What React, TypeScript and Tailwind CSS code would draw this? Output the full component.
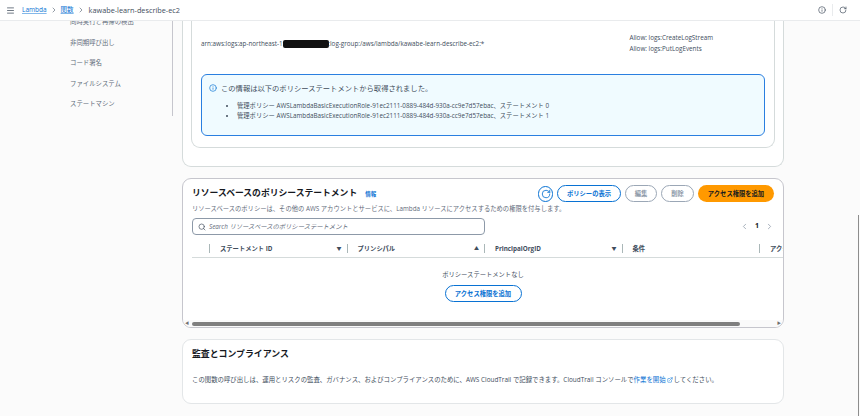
import React from "react";
import { ChevronLeft, ChevronRight, ExternalLink, Info, Menu, RotateCw, Search } from "lucide-react";

const FONT = "font-['Open_Sans','Noto_Sans_CJK_JP',sans-serif]";

const sideItems = ["同時実行と再帰の検出", "非同期呼び出し", "コード署名", "ファイルシステム", "ステートマシン"];

const columns = [
  { label: "ステートメント ID", sort: "▼" },
  { label: "プリンシパル", sort: "▲" },
  { label: "PrincipalOrgID", sort: "▼" },
  { label: "条件", sort: "" },
];

const arn = "AWSLambdaBasicExecutionRole-91ec2111-0889-484d-930a-cc9e7d57ebac、ステートメント";

const App: React.FC = () => {
  return (
    <div className={`${FONT} flex h-[416px] w-[860px] flex-col overflow-hidden bg-[#fbfbfb] text-[#414d5c]`}>
      {/* Breadcrumb bar */}
      <header className="flex h-[21px] shrink-0 items-center border-b border-[#e9ebed] bg-white pr-[13px] pl-[6px] text-[6.5px]">
        <Menu size={9} className="text-[#414d5c]" />
        <a className="ml-[7px] text-[#0972d3] underline decoration-[#0972d3]/50">Lambda</a>
        <ChevronRight size={8} className="mx-[3px] text-[#5f6b7a]" />
        <a className="text-[#0972d3] underline decoration-[#0972d3]/50">関数</a>
        <ChevronRight size={8} className="mx-[3.5px] text-[#5f6b7a]" />
        <span className="text-[7.3px] text-[#414d5c]">kawabe-learn-describe-ec2</span>
        <Info size={8} className="ml-auto text-[#414d5c]" />
        <div className="mx-[6px] h-[12px] w-px bg-[#e9ebed]" />
        <RotateCw size={8} className="text-[#414d5c]" />
      </header>

      <div className="flex min-h-0 flex-1">
        {/* Side nav */}
        <nav className="h-[95px] w-[173px] shrink-0 overflow-hidden border-r border-[#c6c6cd] pl-[70px] text-[6.4px] text-[#5f6b7a]">
          <ul className="-mt-[4px] flex flex-col gap-[10px]">
            {sideItems.map((item) => (
              <li key={item} className="h-[10.5px] leading-[10.5px] whitespace-nowrap">{item}</li>
            ))}
          </ul>
        </nav>

        <main className="ml-[9px] flex w-[602px] flex-col">
          {/* Permissions card, scrolled past its top */}
          <section className="h-[146px] rounded-b-[9px] border border-t-0 border-[#d5dbdb] bg-white pr-[8px] pl-[8px]">
            <div className="h-[127px] rounded-b-[9px] border border-t-0 border-[#d5dbdb] px-[9px]">
              <div className="flex h-[53px] items-start justify-between pt-[12px] text-[6.3px]">
                <div className="mt-[6px] flex items-center">
                  <span>arn:aws:logs:ap-northeast-1:</span>
                  <span className="mx-[-1px] h-[8px] w-[46px] rounded-[2px] bg-[#111]" />
                  <span>:log-group:/aws/lambda/kawabe-learn-describe-ec2:*</span>
                </div>
                <div className="mr-[52px] leading-[10.5px]">
                  <div>Allow: logs:CreateLogStream</div>
                  <div>Allow: logs:PutLogEvents</div>
                </div>
              </div>

              <div className="h-[62px] rounded-[6px] border border-[#2a7fe0] bg-[#f0fbff] px-[7px] py-[8px] text-[6.3px]">
                <div className="flex items-center gap-[3px] leading-[10px]">
                  <Info size={8} className="text-[#0972d3]" />
                  <span className="ml-[1px] text-[7.3px]">この情報は以下のポリシーステートメントから取得されました。</span>
                </div>
                <ul className="mt-[8px] ml-[28px] list-disc leading-[10px]">
                  <li>管理ポリシー {arn} 0</li>
                  <li>管理ポリシー {arn} 1</li>
                </ul>
              </div>
            </div>
          </section>

          {/* Resource-based policy card */}
          <section className="mt-[11px] h-[150px] overflow-hidden rounded-[9px] border border-[#c6c6cd] bg-white">
            <div className="flex items-center justify-between pt-[6px] pr-[9px] pl-[9px]">
              <div className="flex items-baseline gap-[8px]">
                <h2 className="text-[8.8px] font-bold text-[#16191f]">リソースベースのポリシーステートメント</h2>
                <a className="text-[5.5px] font-bold text-[#0972d3]">情報</a>
              </div>
              <div className="flex items-center gap-[4px] text-[6.3px] font-bold">
                <button className="flex h-[16px] w-[15px] items-center justify-center rounded-full border border-[#0972d3] text-[#0972d3]">
                  <RotateCw size={10} />
                </button>
                <button className="h-[17px] w-[64px] rounded-full border border-[#0972d3] text-[#0972d3]">ポリシーの表示</button>
                <button className="h-[17px] w-[32px] rounded-full border border-[#9ba7b6] text-[#8d99a8]">編集</button>
                <button className="h-[17px] w-[33px] rounded-full border border-[#9ba7b6] text-[#8d99a8]">削除</button>
                <button className="h-[17px] w-[76px] rounded-full bg-[#ff9900] text-[#16191f]">アクセス権限を追加</button>
              </div>
            </div>

            <p className="mt-[2px] pl-[9px] text-[6.3px] leading-[10px] text-[#5f6b7a]">
              リソースベースのポリシーは、その他の AWS アカウントとサービスに、Lambda リソースにアクセスするための権限を付与します。
            </p>

            <div className="mt-[4px] flex items-center justify-between pr-[9px] pl-[9px]">
              <div className="flex h-[17px] w-[293px] items-center gap-[3px] rounded-[4px] border border-[#8d99a8] px-[5px] text-[6.3px] text-[#5f6b7a] italic">
                <Search size={8} className="text-[#414d5c]" />
                <span>Search リソースベースのポリシーステートメント</span>
              </div>
              <div className="flex items-center gap-[5px] text-[7px] font-bold text-[#16191f]">
                <ChevronLeft size={9} className="text-[#8d99a8]" />
                <span className="px-[1px]">1</span>
                <ChevronRight size={9} className="text-[#8d99a8]" />
              </div>
            </div>

            <div className="mt-[7px] ml-[9px] flex h-[16px] items-center border-b border-[#d5dbdb] pb-[2px] text-[6.3px] font-bold whitespace-nowrap text-[#414d5c]">
              <div className="w-[17px] shrink-0" />
              {columns.map((col) => (
                <div key={col.label} className="flex h-[9px] w-[137.5px] shrink-0 items-center border-l border-[#aab7b8] pr-[5px] pl-[10px]">
                  <span>{col.label}</span>
                  <span className="ml-auto text-[5px]">{col.sort}</span>
                </div>
              ))}
              <div className="flex h-[9px] flex-1 items-center overflow-hidden border-l border-[#aab7b8] pl-[10px]">アクション</div>
            </div>

            <div className="flex h-[62px] flex-col items-center pt-[12px] text-[6.3px]">
              <span className="leading-[10px] text-[#414d5c]">ポリシーステートメントなし</span>
              <button className="mt-[5px] h-[17px] w-[77px] rounded-full border border-[#0972d3] font-bold text-[#0972d3]">アクセス権限を追加</button>
            </div>

            {/* Horizontal scrollbar */}
            <div className="flex h-[7px] items-center bg-[#fafafa] px-[2px]">
              <span className="text-[4px] text-[#707070]">◀</span>
              <div className="ml-[3px] h-[4px] w-[548px] rounded-full bg-[#7f7f7f]" />
              <span className="ml-auto text-[4px] text-[#707070]">▶</span>
            </div>
          </section>

          {/* Audit card */}
          <section className="mt-[11px] h-[65px] rounded-[9px] border border-[#e3e6e8] bg-white pl-[9px]">
            <h2 className="pt-[6px] text-[8.9px] leading-[15px] font-bold text-[#16191f]">監査とコンプライアンス</h2>
            <p className="mt-[14px] flex items-center text-[6.4px] leading-[10px] whitespace-nowrap text-[#414d5c]">
              この関数の呼び出しは、運用とリスクの監査、ガバナンス、およびコンプライアンスのために、AWS CloudTrail で記録できます。CloudTrail コンソールで
              <a className="text-[#0972d3]">作業を開始</a>
              <ExternalLink size={6} className="mx-[1px] text-[#0972d3]" />
              してください。
            </p>
          </section>
        </main>

        <div className="mt-[194px] ml-auto h-[201px] w-[2px] border-l border-[#8d8d8d]" />
      </div>
    </div>
  );
};

export default App;
